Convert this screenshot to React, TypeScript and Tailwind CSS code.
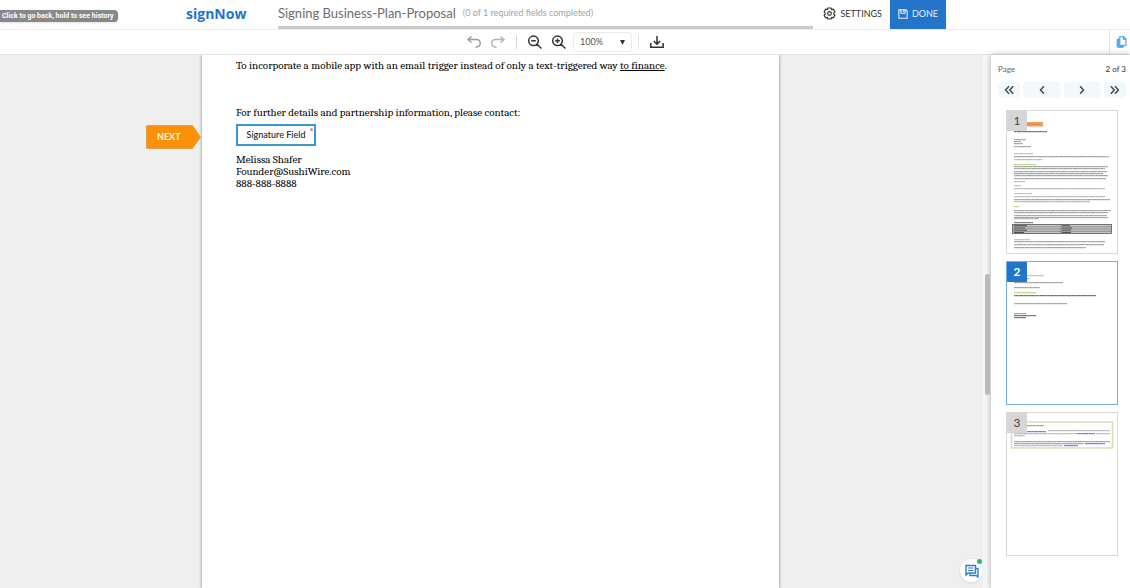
import type { ReactNode } from "react";

type Tone = "ink" | "faint" | "green" | "link" | "bold";

/** One line of miniature page text: [x, y, width, tone]. */
type MiniLine = [number, number, number, Tone];

const toneFill: Record<Tone, string> = {
  ink: "#777777",
  faint: "#999999",
  green: "#8cc63f",
  link: "#3a34f0",
  bold: "#333333",
};

const pageOne: MiniLine[] = [
  [7, 20, 33, "bold"],
  [7, 28, 12, "ink"], [7, 30, 7, "ink"], [7, 32, 9, "ink"], [7, 35, 17, "ink"],
  [7, 42, 19, "green"], [7, 45, 95, "ink"], [7, 48, 28, "faint"],
  [7, 53, 22, "green"], [7, 55, 94, "ink"], [7, 57, 91, "ink"], [7, 60, 93, "ink"], [7, 62, 89, "ink"], [7, 64, 94, "ink"], [7, 67, 92, "ink"], [7, 70, 11, "faint"],
  [7, 74, 7, "green"], [7, 77, 91, "faint"],
  [7, 82, 18, "green"], [7, 85, 91, "faint"], [7, 88, 96, "ink"], [7, 90, 76, "faint"],
  [7, 95, 5, "green"], [7, 99, 97, "ink"], [7, 101, 94, "ink"], [7, 104, 93, "ink"], [7, 106, 94, "ink"], [7, 107, 25, "faint"],
  [7, 111, 19, "bold"],
  [7, 128, 16, "green"], [7, 130, 91, "ink"], [7, 133, 90, "ink"], [7, 136, 72, "ink"],
];

const pageTwo: MiniLine[] = [
  [19, 13, 18, "green"], [19, 16, 3, "ink"],
  [7, 20, 49, "ink"], [7, 25, 26, "ink"],
  [7, 30, 22, "green"], [7, 33, 73, "bold"], [80, 33, 9, "bold"],
  [7, 41, 53, "ink"],
  [7, 51, 12, "ink"], [7, 53, 22, "bold"], [7, 55, 12, "bold"],
];

const pageThree: MiniLine[] = [
  [19, 12, 18, "ink"],
  [19, 18, 20, "link"], [41, 17, 62, "faint"], [7, 20, 63, "faint"], [70, 20, 18, "link"], [89, 20, 14, "faint"], [7, 22, 11, "faint"],
  [7, 28, 96, "ink"], [7, 30, 70, "ink"], [78, 30, 20, "link"], [7, 32, 49, "faint"], [57, 32, 14, "link"],
];

function MiniPage({ lines, children }: { lines: MiniLine[]; children?: ReactNode }) {
  return (
    <svg viewBox="0 0 110 142" className="block h-auto w-full" aria-hidden="true">
      {children}
      {lines.map(([x, y, w, tone], i) => (
        <g key={i} stroke={toneFill[tone]} fill="none">
          <path d={`M${x} ${y + 0.6}h${w}`} strokeWidth="1.3" strokeOpacity=".45" />
          <path d={`M${x} ${y + 0.6}h${w}`} strokeWidth="1" strokeOpacity=".45" strokeDasharray="2.3 .9 4.1 .7 1.6 .8" strokeDashoffset={i * 1.7} />
        </g>
      ))}
    </svg>
  );
}

function PageTable() {
  return (
    <g>
      <rect x="12" y="11" width="24" height="4.5" rx="1" fill="#f39b56" />
      <path d="M20 13.2h13" stroke="#e57f31" strokeWidth=".8" strokeDasharray="3 .6" />
      <rect x="5.5" y="113.5" width="99" height="9" fill="#c6c6c6" stroke="#555" strokeWidth=".8" />
      <path d="M5.5 115.8h99M5.5 118h99M5.5 120.3h99M54 113.5v9" stroke="#777" strokeWidth=".7" />
      <path d="M7 114.700h13M7 117h11M7 119.200h13M7 121.500h10M55 114.700h8M55 117h10M55 119.200h9M55 121.500h9" stroke="#444" strokeWidth=".9" />
    </g>
  );
}

const thumbnails = [
  { page: 1, art: <MiniPage lines={pageOne}><PageTable /></MiniPage> },
  { page: 2, art: <MiniPage lines={pageTwo} /> },
  {
    page: 3,
    art: (
      <MiniPage lines={pageThree}>
        <rect x="4.500" y="9" width="101" height="26" fill="none" stroke="#d3dfae" strokeWidth="1.400" />
      </MiniPage>
    ),
  },
];

function Icon({ d, className = "size-4", weight = 1.5 }: { d: string; className?: string; weight?: number }) {
  return (
    <svg viewBox="0 0 16 16" className={className} fill="none" stroke="currentColor" strokeWidth={weight} aria-hidden="true">
      <path d={d} />
    </svg>
  );
}

const undo = "M5.500 2.500 2 5.500l3.500 3M2 5.500h8.500a3.700 3.700 0 0 1 0 7.500H9.500";
const redo = "M10.500 2.500 14 5.500l-3.500 3M14 5.500H5.500a3.700 3.700 0 0 0 0 7.500H6.500";
const zoomOut = "M11.300 6.800a4.800 4.800 0 1 1-9.600 0 4.800 4.800 0 0 1 9.600 0ZM10.200 10.300l4.200 4.200M4.200 6.800h4.600";
const zoomIn = zoomOut + "M6.500 4.500v4.600";
const download = "M8 2v8M4.800 7 8 10.200 11.200 7M1.800 9v4.300h12.400V9";

const toolButton = "flex size-6 items-center justify-center";
const navButton = "flex h-4 items-center justify-center rounded-sm bg-[#f3f8fb] text-[#3f4a52]";

function Header() {
  return (
    <header className="relative flex h-[30px] shrink-0 border-b border-[#ececec] pr-[184px] pl-[186px]">
      <div
        role="tooltip"
        className="absolute top-[10px] left-0 rounded-r-sm bg-[#888] px-[2px] pr-1 font-[Roboto,sans-serif] text-[7px] leading-3 font-bold whitespace-nowrap text-white shadow"
      >
        Click to go back, hold to see history
      </div>
      <a href="#" className="w-[92px] font-['Open_Sans',sans-serif] text-[14px] leading-[27px] font-bold text-[#1f75cc]">
        signNow
      </a>
      <div className="flex min-w-0 flex-1 flex-col justify-between">
        <div className="flex items-center gap-[7px] whitespace-nowrap">
          <h1 className="text-[13px] leading-[26px] text-[#6c6c6c]">Signing Business-Plan-Proposal</h1>
          <span className="text-[9px] text-[#a2a2a2]">(0 of 1 required fields completed)</span>
        </div>
        <div role="progressbar" aria-label="Required fields" aria-valuenow={0} aria-valuemax={1} className="h-[3px] bg-[#cbcbcb]" />
      </div>
      <button className="ml-[10px] flex items-center gap-1 pb-[2px] text-[9px] text-[#333]">
        <svg viewBox="0 0 16 16" className="size-[13px]" fill="none" stroke="currentColor" strokeWidth="1.400" strokeLinejoin="round" aria-hidden="true">
          <path d="M6 1.200h4l.5 2 2.200-.6 2 3.400-1.500 1.500v1l1.500 1.500-2 3.400-2.200-.6-.5 2H6l-.5-2-2.200.6-2-3.400 1.500-1.500v-1L1.300 6l2-3.400 2.200.6z" />
          <circle cx="8" cy="8" r="2.300" />
        </svg>
        SETTINGS
      </button>
      <button className="ml-2 flex w-14 items-center justify-center gap-1 bg-[#2474c9] pb-[1px] text-[9px] text-[#e4f1fc]">
        <svg viewBox="0 0 12 12" className="size-[10px]" fill="none" stroke="currentColor" strokeWidth="1.300" aria-hidden="true">
          <path d="M1 1h8.500L11 2.500V11H1zM3.500 1v4h5V1M6.800 2v1.500" />
        </svg>
        DONE
      </button>
    </header>
  );
}

function Toolbar() {
  return (
    <div className="flex h-[25px] shrink-0 items-center border-b border-[#e2e2e2]">
      <div className="flex flex-1 items-center justify-center pl-[22px] text-[#333]">
        <button aria-label="Undo" className={`${toolButton} text-[#9c9c9c]`}><Icon d={undo} /></button>
        <button aria-label="Redo" className={`${toolButton} text-[#b3b3b3]`}><Icon d={redo} /></button>
        <span className="mx-[6px] h-[14px] w-px bg-[#d5d5d5]" />
        <button aria-label="Zoom out" className={toolButton}><Icon d={zoomOut} /></button>
        <button aria-label="Zoom in" className={toolButton}><Icon d={zoomIn} /></button>
        <div className="relative ml-[2px] flex h-5 w-[59px] items-center rounded-sm border border-[#ebebeb]">
          <select aria-label="Zoom level" className="h-full w-full appearance-none bg-transparent pl-[6px] text-[9px] text-[#555]">
            <option>100%</option>
          </select>
          <svg viewBox="0 0 6 6" className="pointer-events-none absolute right-[6px] size-[5px] fill-[#333]" aria-hidden="true">
            <path d="M0 0h6L3 6z" />
          </svg>
        </div>
        <span className="mx-[6px] h-[14px] w-px bg-[#e2e2e2]" />
        <button aria-label="Download" className={toolButton}><Icon d={download} /></button>
      </div>
      <button aria-label="Pages" className="flex h-full w-[21px] items-center justify-center border-l border-[#e2e2e2] pl-[2px] text-[#3e9fe4]">
        <svg viewBox="0 0 12 14" className="h-3 w-[11px]" fill="none" stroke="currentColor" strokeWidth="1.300" strokeLinejoin="round" aria-hidden="true">
          <path d="M3 3.500 1 4.500v7.300l1.300 1.400h5l1.200-1.700H4L3 10z" fill="#7cc0f0" />
          <path d="M4 .8h4.500l2.700 2.700v7.300H4zM8.200.8v3h3" fill="#fff" />
        </svg>
      </button>
    </div>
  );
}

function DocumentPage() {
  return (
    <article className="relative w-[577px] bg-white px-[34px] font-[Cambria,'Liberation_Serif',serif] text-[11px] leading-3 text-black shadow-[0_0_3px_#777]">
      <p className="pt-[5px]">
        To incorporate a mobile app with an email trigger instead of only a text-triggered way <u>to finance</u>.
      </p>
      <p className="pt-[35px]">For further details and partnership information, please contact:</p>
      <button className="relative mt-[5px] flex h-[22px] w-20 items-center justify-center border-2 border-[#3a96d0] font-[Lato,sans-serif] text-[9px] font-medium text-[#222]">
        Signature Field
        <span className="absolute top-[2px] right-[1px] size-[3px] rounded-full bg-[#f08080]" />
      </button>
      <p className="pt-2">
        Melissa Shafer
        <br />
        Founder@SushiWire.com
        <br />
        888-888-8888
      </p>
      <button className="absolute top-[70px] -left-[56px] flex h-6 w-[55px] items-center">
        <svg viewBox="0 0 55 24" className="absolute inset-0 size-full" aria-hidden="true">
          <path d="M1.500.5h45L54.500 12l-8 11.500h-45a1 1 0 0 1-1-1v-21a1 1 0 0 1 1-1Z" fill="#fb9108" stroke="#e59c4c" />
        </svg>
        <span className="relative pl-[11px] font-[Lato,sans-serif] text-[9px] font-bold text-[#fff3df]">NEXT</span>
      </button>
    </article>
  );
}

function Sidebar() {
  return (
    <aside className="z-10 flex w-[139px] shrink-0 flex-col bg-white pr-1 pl-[7px] shadow-[0_0_6px_#aaa]">
      <div className="flex justify-between pt-[7px] text-[8px] leading-[14px]">
        <span className="text-[#666]">Page</span>
        <span className="text-[#333]">2 of 3</span>
      </div>
      <nav aria-label="Pages" className="mt-[6px] flex gap-[3px]">
        <button aria-label="First page" className={`${navButton} w-[22px]`}><Icon weight={2} className="size-3" d="M8 3 3.500 8 8 13M13.500 3 9 8l4.500 5" /></button>
        <button aria-label="Previous page" className={`${navButton} flex-1`}><Icon weight={2} className="size-3" d="M10.500 3 6 8l4.500 5" /></button>
        <button aria-label="Next page" className={`${navButton} flex-1`}><Icon weight={2} className="size-3" d="M5.500 3 10 8l-4.500 5" /></button>
        <button aria-label="Last page" className={`${navButton} w-[22px]`}><Icon weight={2} className="size-3" d="M2.500 3 7 8l-4.500 5M8 3l4.500 5L8 13" /></button>
      </nav>
      <div className="mt-3 flex flex-col gap-[7px] pr-2 pl-2">
        {thumbnails.map(({ page, art }) => (
          <button
            key={page}
            aria-label={`Page ${page}`}
            aria-current={page === 2 ? "page" : undefined}
            className={`relative border bg-white ${page === 2 ? "border-[#75aedb]" : "border-[#d8d8d8]"}`}
          >
            {art}
            <span
              className={`absolute top-0 left-0 size-5 text-center text-[12px] leading-5 ${page === 2 ? "bg-[#2474c9] font-bold text-white" : "bg-[#d6d6d6] text-[#444]"}`}
            >
              {page}
            </span>
          </button>
        ))}
      </div>
    </aside>
  );
}

export default function App() {
  return (
    <div className="flex h-screen flex-col overflow-hidden bg-white font-[Lato,sans-serif]">
      <Header />
      <Toolbar />
      <div className="flex min-h-0 flex-1">
        <main className="relative flex min-w-0 flex-1 justify-center overflow-hidden bg-[#efefef] pr-[10px]">
          <DocumentPage />
          <div className="absolute inset-y-0 right-0 w-2 bg-[#f7f7f7]">
            <div className="mx-auto mt-[219px] h-[121px] w-[5px] rounded-full bg-[#bdbdbd]" />
          </div>
        </main>
        <Sidebar />
      </div>
      <button aria-label="Open chat" className="fixed right-[147px] bottom-[6px] z-20 flex size-[23px] items-center justify-center rounded-full bg-white text-[#2e7fc9] shadow">
        <svg viewBox="0 0 14 14" className="size-[14px]" fill="none" stroke="currentColor" strokeWidth="1.400" aria-hidden="true">
          <path d="M1 1.500h9.500v7.500H3L1 11zM11 4.500h2V13l-2-1.500H5V9" />
          <path d="M3 4h5.500M3 6.500h5.500" strokeWidth="1" />
        </svg>
        <span className="absolute top-0 right-[1px] size-[5px] rounded-full bg-[#35b279]" />
      </button>
    </div>
  );
}
